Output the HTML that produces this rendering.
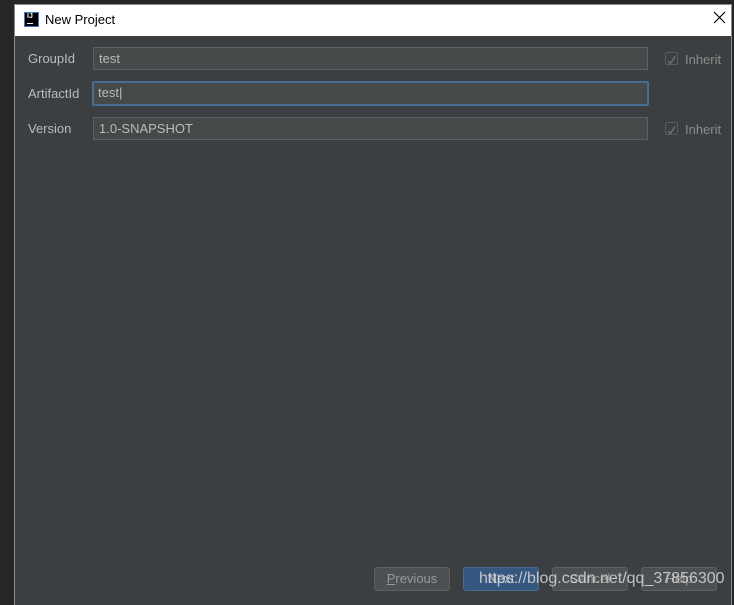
<!DOCTYPE html>
<html><head><style>
body{margin:0;width:734px;height:600px;background:#262626;position:relative;overflow:hidden;font-family:"Liberation Sans",sans-serif;}
.win{position:absolute;left:14px;top:4px;width:716px;height:600px;border:1px solid #8a8a8a;border-bottom:none;background:#3c3f41;}
.title{position:absolute;left:0;top:0;width:716px;height:31px;background:#fff;}
.title .t{position:absolute;left:30px;top:7px;font-size:13px;color:#000;}
.logo{position:absolute;left:9px;top:7px;width:15px;height:15px;background:#000;border:1px solid #3a7bd5;box-sizing:border-box;color:#fff;font-size:7px;font-weight:bold;line-height:8px;padding-left:2px;}
.logo:after{content:"";position:absolute;left:2px;bottom:2px;width:6px;height:1px;background:#fff;}
.x{position:absolute;right:5px;top:6px;}
.lbl{position:absolute;left:13px;font-size:13px;color:#bbbbbb;}
.in{position:absolute;left:78px;width:555px;height:23px;box-sizing:border-box;border:1px solid #5e6060;background:#45494a;color:#bbbbbb;font-size:13px;padding:3px 0 0 5px;}
.in.f{border:2px solid #466d94;padding:2px 0 0 4px;border-radius:2px;left:77px;width:557px;height:25px;}
.cb{position:absolute;left:650px;width:13px;height:13px;box-sizing:border-box;border:1px solid #5a5d5f;border-radius:2px;}
.inh{position:absolute;left:670px;font-size:13px;color:#8c8c8c;}
.btn{position:absolute;top:562px;width:76px;height:24px;box-sizing:border-box;border:1px solid #5e6060;border-radius:3px;background:#4c5052;color:#999;font-size:13px;text-align:center;line-height:22px;}
.wm{position:absolute;left:479px;top:570px;font-size:16px;color:#d8d8d8;opacity:.85;}
</style></head><body>
<div class="win">
<div class="title"><div class="logo">IJ</div><div class="t">New Project</div>
<svg class="x" width="13" height="13" viewBox="0 0 13 13"><path d="M1 1L12 12M12 1L1 12" stroke="#000" stroke-width="1.2"/></svg></div>
<div class="lbl" style="top:46px">GroupId</div>
<div class="in" style="top:42px">test</div>
<div class="cb" style="top:47px"><svg width="11" height="11" viewBox="0 0 11 11"><path d="M2 6L4.5 8.5L9 1.5" stroke="#707375" stroke-width="1.4" fill="none"/></svg></div><div class="inh" style="top:47px">Inherit</div>
<div class="lbl" style="top:81px">ArtifactId</div>
<div class="in f" style="top:76px">test|</div>
<div class="lbl" style="top:116px">Version</div>
<div class="in" style="top:112px">1.0-SNAPSHOT</div>
<div class="cb" style="top:117px"><svg width="11" height="11" viewBox="0 0 11 11"><path d="M2 6L4.5 8.5L9 1.5" stroke="#707375" stroke-width="1.4" fill="none"/></svg></div><div class="inh" style="top:117px">Inherit</div>
<div class="btn" style="left:359px"><u>P</u>revious</div>
<div class="btn" style="left:448px;background:#365880;border-color:#4a6a90;color:#bbb">Next</div>
<div class="btn" style="left:537px">Cancel</div>
<div class="btn" style="left:626px">Help</div>
</div>
<div class="wm">https://blog.csdn.net/qq_37856300</div>
</body></html>
